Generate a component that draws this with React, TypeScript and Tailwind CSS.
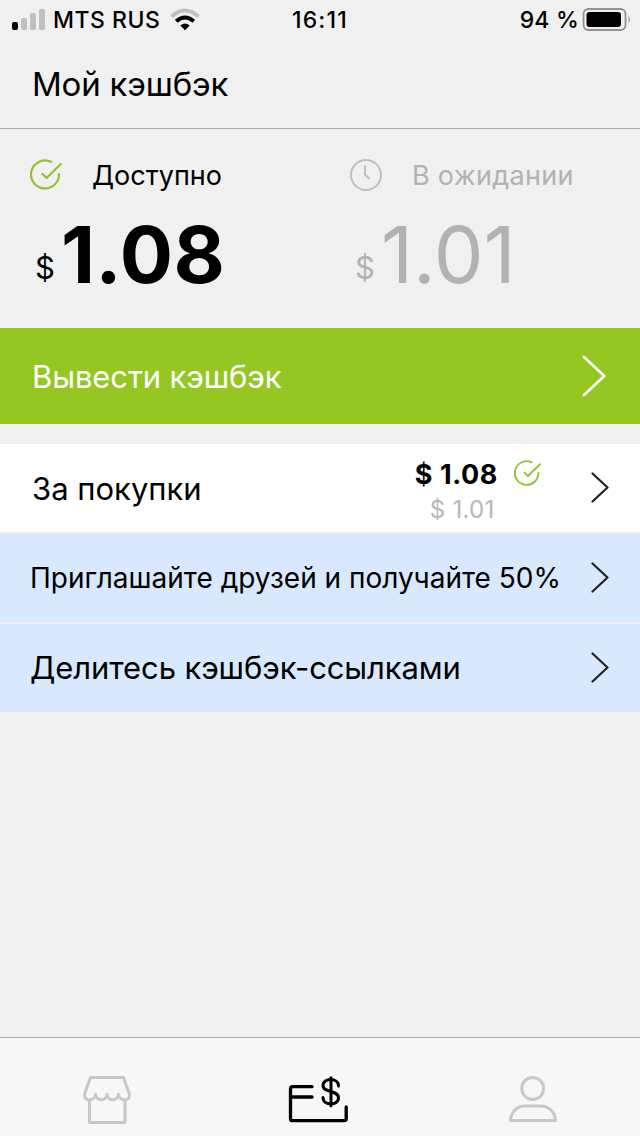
type IconProps = { className?: string };

const CheckCircle = ({ className }: IconProps) => (
  <svg viewBox="0 0 32 32" fill="none" stroke="#90c13c" strokeWidth="2.2" strokeLinecap="round" strokeLinejoin="round" className={className}>
    <path d="M21 2.8A14 14 0 1 0 29 15" />
    <path d="M12.5 15 16.6 19 30.8 5" />
  </svg>
);

const Chevron = ({ className }: IconProps) => (
  <svg viewBox="0 0 18 32" fill="none" stroke="currentColor" strokeWidth="2.2" strokeLinecap="round" strokeLinejoin="round" className={className}>
    <path d="M1.5 1.5 16.5 15.5 1.5 29.5" />
  </svg>
);

const rows = [
  { label: "Приглашайте друзей и получайте 50%", text: "text-[28px]" },
  { label: "Делитесь кэшбэк-ссылками", text: "text-[31px] tracking-[-0.1px] pb-px" },
];

function StatusBar() {
  return (
    <div className="h-10 shrink-0 grid grid-cols-3 items-center text-[23px] leading-none">
      <div className="flex items-center pl-3">
        <svg width="34" height="22" viewBox="0 0 34 22" className="shrink-0">
          <rect x="0" y="13" width="6" height="8" rx="2" fill="#000" />
          <rect x="9" y="9" width="6" height="12" rx="2" fill="#c0c0c0" />
          <rect x="18" y="4" width="6" height="17" rx="2" fill="#c0c0c0" />
          <rect x="27" y="0" width="6" height="21" rx="2" fill="#c0c0c0" />
        </svg>
        <span className="ml-[7px] whitespace-nowrap font-medium tracking-[0.5px]">MTS RUS</span>
        <svg width="32" height="24" viewBox="0 0 32 24" fill="none" className="shrink-0 ml-[9px]">
          <path d="M2.6 8.4Q16 -3.4 29.4 8.4" stroke="#c0c0c0" strokeWidth="4" />
          <path d="M7.2 13.3Q16 5.7 24.8 13.3" stroke="#000" strokeWidth="4" />
          <path d="M11.3 17.5Q16 13.7 20.7 17.5L16 22.3Z" fill="#000" />
        </svg>
      </div>
      <div className="text-center font-medium tracking-[1.2px]">16:11</div>
      <div className="flex items-center justify-end pr-2">
        <span className="whitespace-nowrap font-medium tracking-[0.2px]">94 %</span>
        <svg width="50" height="24" viewBox="0 0 50 24" className="shrink-0 ml-[3px]">
          <rect x="1.5" y="1" width="42" height="21" rx="5" fill="none" stroke="#929292" strokeWidth="1.8" />
          <rect x="4.5" y="4" width="34.5" height="15" rx="3" fill="#000" />
          <path d="M46.5 8Q49.5 11.5 46.5 15Z" fill="#929292" />
        </svg>
      </div>
    </div>
  );
}

export default function App() {
  return (
    <div className="w-[640px] h-[1136px] flex flex-col overflow-hidden bg-[#f0f0f0] text-black font-['Inter',sans-serif]">
      <StatusBar />

      <header className="h-[89px] shrink-0 flex items-center pl-8 border-b border-[#ababab]">
        <h1 className="text-[33px] leading-none tracking-[-0.2px]">Мой кэшбэк</h1>
      </header>

      <section className="h-[199px] shrink-0 grid grid-cols-2 pt-[26px]">
        <div>
          <div className="flex h-10 items-center pl-[30px]">
            <CheckCircle className="size-8" />
            <span className="ml-[30px] text-[27px] leading-none">Доступно</span>
          </div>
          <div className="mt-5 flex h-20 items-start pl-[35px]">
            <span className="mt-[37px] text-[31px] leading-none">$</span>
            <span className="ml-[6px] text-[79px] leading-[78px] font-bold tracking-[0.4px]">1.08</span>
          </div>
        </div>
        <div className="text-[#b2b2b2]">
          <div className="flex h-10 items-center pl-[30px]">
            <svg viewBox="0 0 32 32" fill="none" stroke="#bfbfbf" strokeWidth="2" strokeLinecap="round" strokeLinejoin="round" className="size-8">
              <circle cx="16" cy="16" r="15" />
              <path d="M15 7v8.5l4 3.8" />
            </svg>
            <span className="ml-[30px] text-[27px] leading-none tracking-[0.3px]">В ожидании</span>
          </div>
          <div className="mt-5 flex h-20 items-start pl-[35px]">
            <span className="mt-[37px] text-[31px] leading-none">$</span>
            <span className="ml-[6px] text-[79px] leading-[78px]">1.01</span>
          </div>
        </div>
      </section>

      <button className="h-24 shrink-0 flex items-center justify-between pl-8 pr-[34px] bg-[#94c722] text-white">
        <span className="text-[31px] leading-none tracking-[-0.1px]">Вывести кэшбэк</span>
        <svg width="24" height="42" viewBox="0 0 24 42" fill="none" stroke="currentColor" strokeWidth="2.6" strokeLinecap="round" strokeLinejoin="round">
          <path d="M2 2 22.3 21 2 40" />
        </svg>
      </button>

      <main className="mt-5 flex flex-1 flex-col gap-[2px]">
        <div className="h-[88px] flex items-center pl-8 pr-[31px] bg-white">
          <span className="text-[31px] leading-none">За покупки</span>
          <div className="ml-auto flex flex-col pt-[7px]">
            <div className="flex h-9 items-center">
              <span className="pt-px text-[27px] leading-none font-bold tracking-[0.6px]">$ 1.08</span>
              <CheckCircle className="size-[27px] ml-4" />
            </div>
            <span className="h-9 pl-[15px] text-[24px] leading-9 tracking-[0.3px] text-[#b8b8b8]">$ 1.01</span>
          </div>
          <Chevron className="w-[18px] h-8 ml-[50px] text-[#222]" />
        </div>
        {rows.map((row) => (
          <div key={row.label} className="h-[88px] flex items-center justify-between pl-[30px] pr-[31px] bg-[#d9e9fd]">
            <span className={`leading-none whitespace-nowrap ${row.text}`}>{row.label}</span>
            <Chevron className="w-[18px] h-8 text-[#222]" />
          </div>
        ))}
      </main>

      <nav className="h-[99px] shrink-0 grid grid-cols-3 justify-items-center items-start pt-[38px] border-t border-[#a9a9a9] bg-[#f7f7f7]">
        <svg width="48" height="48" viewBox="0 0 48 48" fill="none" stroke="#c8c8c8" strokeWidth="3" strokeLinejoin="round">
          <path d="M7.5 1.5h33L46.4 18c.6 9-10.4 6.5-11 .3-.6 7.3-10.8 7.3-11.4 0-.6 7.3-10.8 7.3-11.4 0-.6 6.2-11.6 8.7-11-.3Z" />
          <path d="M6.5 24v22.5h35.5V24" />
        </svg>
        <svg width="60" height="48" viewBox="0 0 60 48" fill="none" stroke="#000" strokeWidth="3.3" strokeLinecap="round" strokeLinejoin="round" className="mr-1">
          <path d="M24 10.7H4.5a2 2 0 0 0-2 2V42.7a2 2 0 0 0 2 2H56a2.2 2.2 0 0 0 2.2-2.2V31" />
          <path d="M2.5 21H24" />
          <path d="M50.5 10C50.5 1.5 35 1.5 35 9.5c0 8 15.5 4 15.5 12.5 0 8-15.5 8-15.5-.5M43 1.7v28" strokeWidth="3" />
        </svg>
        <svg width="48" height="48" viewBox="0 0 48 48" fill="none" stroke="#c8c8c8" strokeWidth="3">
          <circle cx="23.7" cy="12.5" r="11" />
          <path d="M1.5 44.5C2 35 9 30 16 30h15.5C38.5 30 46 35 46.5 44.5Z" strokeLinejoin="round" />
        </svg>
      </nav>
    </div>
  );
}
